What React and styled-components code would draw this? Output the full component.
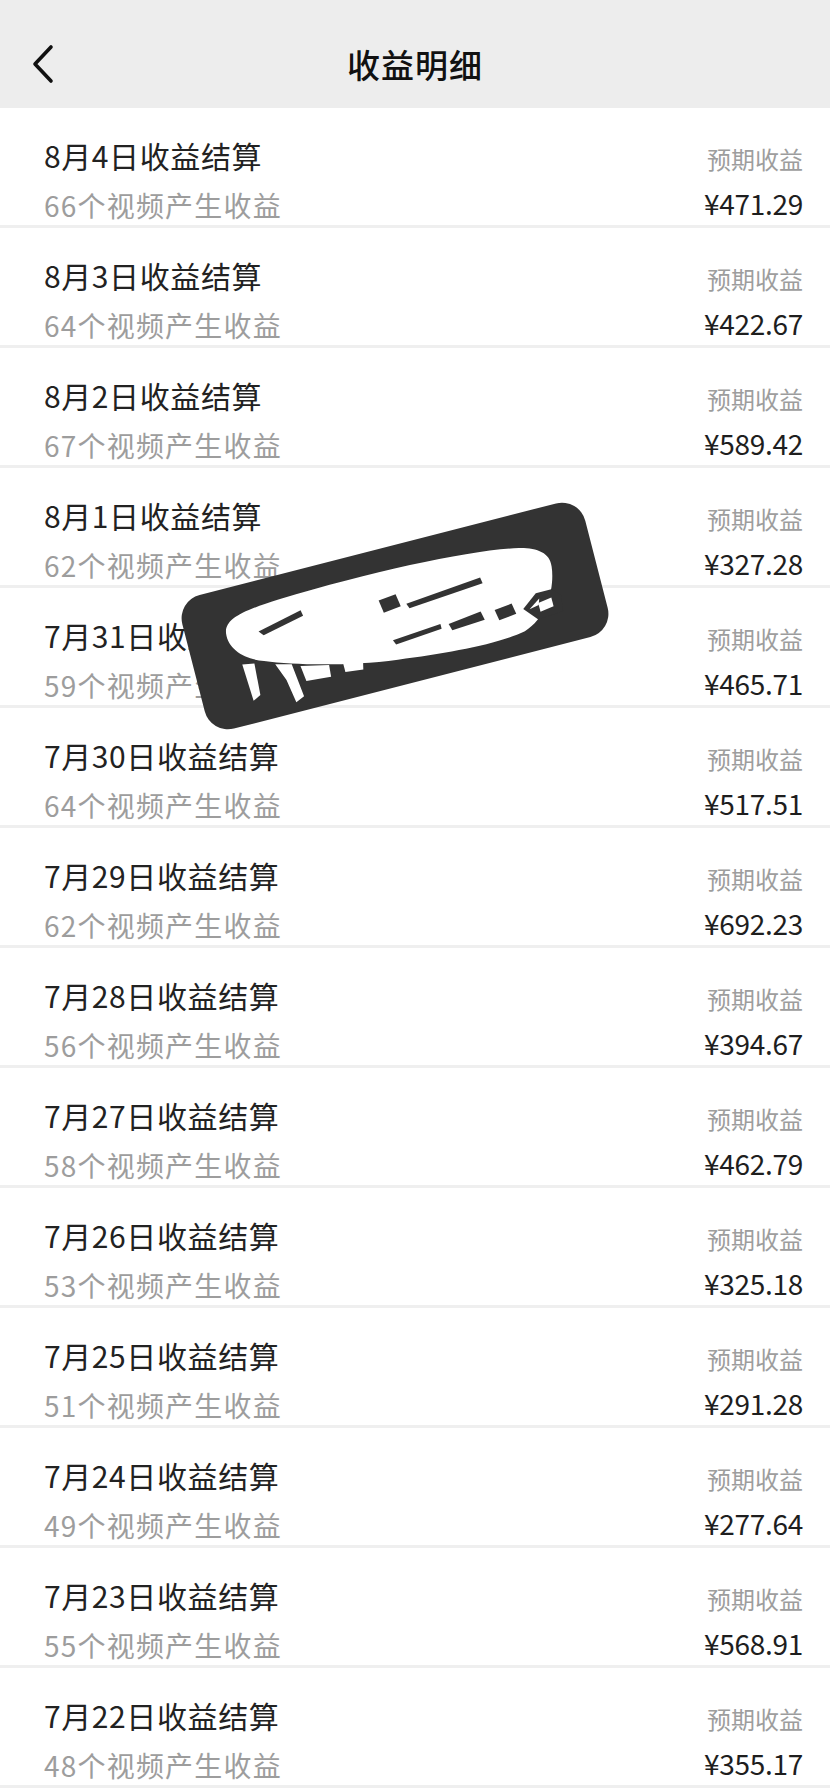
import React from "react";
import styled, { createGlobalStyle } from "styled-components";

const rows = [
  { date: "8月4日", count: 66, amount: "471.29" },
  { date: "8月3日", count: 64, amount: "422.67" },
  { date: "8月2日", count: 67, amount: "589.42" },
  { date: "8月1日", count: 62, amount: "327.28" },
  { date: "7月31日", count: 59, amount: "465.71" },
  { date: "7月30日", count: 64, amount: "517.51" },
  { date: "7月29日", count: 62, amount: "692.23" },
  { date: "7月28日", count: 56, amount: "394.67" },
  { date: "7月27日", count: 58, amount: "462.79" },
  { date: "7月26日", count: 53, amount: "325.18" },
  { date: "7月25日", count: 51, amount: "291.28" },
  { date: "7月24日", count: 49, amount: "277.64" },
  { date: "7月23日", count: 55, amount: "568.91" },
  { date: "7月22日", count: 48, amount: "355.17" },
];

function BackIcon() {
  return (
    <svg width="24" height="40" viewBox="0 0 24 40">
      <path d="M19 3 L3 20 L19 37" fill="none" stroke="#111" strokeWidth="3.6" strokeLinecap="round" strokeLinejoin="round" />
    </svg>
  );
}

function Scribble() {
  // white marker scribble over the redacted text, in the card's own frame
  return (
    <svg width="416" height="138" viewBox="0 0 416 138">
      <path
        d="M40 44 C42 30 60 26 100 24 C200 20 300 24 345 34 C362 38 374 46 372 60 C370 80 356 108 330 116 C300 122 250 118 200 112 C150 106 100 92 70 80 C52 74 38 60 40 44 Z"
        fill="#fff"
      />
      <path d="M72 50 L118 40 L119 46 L76 55 Z" fill="#333" />
      <path d="M196 50 L214 48 L216 61 L198 63 Z" fill="#333" />
      <path d="M222 60 L300 53 L301 59 L224 65 Z" fill="#333" />
      <path d="M200 92 L250 88 L250 93 L202 97 Z" fill="#333" />
      <path d="M258 90 L292 86 L294 95 L260 97 Z" fill="#333" />
      <path d="M306 88 L324 86 L326 97 L308 99 Z" fill="#333" />
      <path d="M334 94 L350 82 L366 82 L374 90 L372 106 L346 108 Z" fill="#333" />
      <path d="M350 92 L364 90 L364 99 L350 101 Z" fill="#fff" />
      <path d="M340 96 L352 88 L350 94 Z" fill="#fff" />
      <path d="M48 78 L60 80 L58 112 L50 116 Z" fill="#fff" />
      <path d="M80 86 L96 90 L100 124 L91 128 L87 104 Z" fill="#fff" />
      <path d="M104 94 L132 100 L131 112 L106 110 Z" fill="#fff" />
      <path d="M146 100 L166 104 L164 113 L146 111 Z" fill="#fff" />
    </svg>
  );
}

export default function App() {
  return (
    <>
      <GlobalStyle />
      <Page>
        <Header>
          <BackButton>
            <BackIcon />
          </BackButton>
          <Title>收益明细</Title>
          <span />
        </Header>

        <List>
          {rows.map((r) => (
            <Row key={r.date}>
              <Left>
                <RowTitle>{r.date}收益结算</RowTitle>
                <RowSub>{r.count}个视频产生收益</RowSub>
              </Left>
              <Right>
                <Label>预期收益</Label>
                <Amount>¥{r.amount}</Amount>
              </Right>
            </Row>
          ))}
        </List>

        <Redaction>
          <Scribble />
        </Redaction>
      </Page>
    </>
  );
}

const GlobalStyle = createGlobalStyle`
  body {
    margin: 0;
    background: #fff;
    font-family: "Noto Sans CJK SC", "Noto Sans", sans-serif;
  }
`;

const Page = styled.div`
  position: relative;
  width: 830px;
  min-height: 1792px;
  background: #fff;
  overflow: hidden;
`;

const Header = styled.div`
  display: grid;
  grid-template-columns: 1fr auto 1fr;
  align-items: center;
  height: 108px;
  padding: 20px 32px 0;
  box-sizing: border-box;
  background: #ededed;
`;

const BackButton = styled.div`
  display: flex;
  align-items: center;
`;

const Title = styled.div`
  font-size: 33px;
  font-weight: 500;
  color: #111;
  letter-spacing: 1px;
  line-height: 1;
`;

const List = styled.div`
  display: flex;
  flex-direction: column;
`;

const Row = styled.div`
  display: flex;
  justify-content: space-between;
  height: 120px;
  box-sizing: border-box;
  padding: 0 27px 0 44px;
  border-bottom: 3px solid #efefef;
`;

const Left = styled.div`
  display: flex;
  flex-direction: column;
  padding-top: 32px;
`;

const RowTitle = styled.div`
  font-size: 30px;
  line-height: 1;
  color: #222;
  letter-spacing: 0.6px;
`;

const RowSub = styled.div`
  margin-top: 21px;
  font-size: 28px;
  line-height: 1;
  color: #9d9d9d;
  letter-spacing: 1.2px;
`;

const Right = styled.div`
  display: flex;
  flex-direction: column;
  align-items: flex-end;
  padding-top: 39px;
`;

const Label = styled.div`
  font-size: 24px;
  line-height: 1;
  color: #9d9d9d;
`;

const Amount = styled.div`
  margin-top: 18px;
  font-size: 28px;
  line-height: 1;
  color: #1e1e1e;
  letter-spacing: -0.3px;
`;

const Redaction = styled.div`
  position: absolute;
  left: 187px;
  top: 547px;
  width: 416px;
  height: 138px;
  border-radius: 24px;
  background: #333;
  transform: rotate(-14.4deg);
  display: flex;
  align-items: center;
  justify-content: center;
  overflow: hidden;
`;
